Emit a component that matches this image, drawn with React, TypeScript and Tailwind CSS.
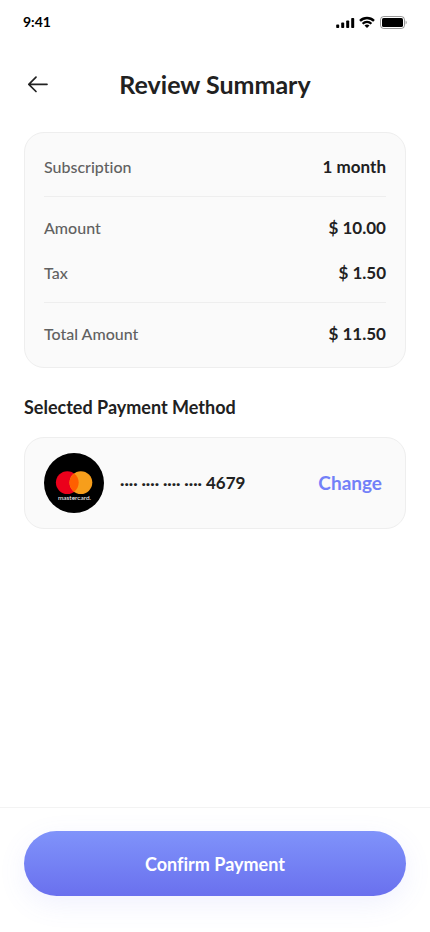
import React from "react";

const charges = [
  { label: "Amount", value: "$ 10.00" },
  { label: "Tax", value: "$ 1.50" },
];

function StatusBar() {
  return (
    <div className="flex h-11 items-center justify-between px-[23px] text-black">
      <span className="text-sm font-bold">9:41</span>
      <div className="flex items-center gap-1">
        <svg width="19" height="12" viewBox="0 0 19 12" fill="currentColor" aria-hidden="true">
          <rect x="0.2" y="8.6" width="3" height="3.4" rx="0.8" />
          <rect x="5.2" y="6.6" width="3" height="5.4" rx="0.8" />
          <rect x="10.2" y="4.4" width="3" height="7.6" rx="0.8" />
          <rect x="15.2" y="2" width="3" height="10" rx="0.8" />
        </svg>
        <svg width="16" height="12" viewBox="0 0 16 12" fill="none" stroke="currentColor" aria-hidden="true">
          <path d="M1 4.800a10 10 0 0 1 14 0" strokeWidth="2.400" />
          <path d="M3.600 7.700a6.200 6.200 0 0 1 8.800 0" strokeWidth="2.200" />
          <path d="M8 12 5.500 9.600a3.600 3.600 0 0 1 5 0z" fill="currentColor" stroke="none" />
        </svg>
        <svg width="28" height="14" viewBox="0 0 28 14" fill="none" aria-hidden="true">
          <rect x="1.500" y="1.500" width="24" height="12" rx="3.200" stroke="#000" strokeOpacity="0.4" />
          <rect x="3" y="3" width="21" height="9" rx="1.600" fill="#000" />
          <path d="M26.600 5.500v4c.7-.4 1.100-1.100 1.100-2s-.4-1.600-1.100-2z" fill="#000" fillOpacity="0.4" />
        </svg>
      </div>
    </div>
  );
}

function Row({ label, value }: { label: string; value: string }) {
  return (
    <div className="flex items-center justify-between">
      <dt className="text-base font-medium text-[#616161]">{label}</dt>
      <dd className="text-[17px] leading-7 font-bold text-[#212121]">{value}</dd>
    </div>
  );
}

function MastercardLogo() {
  return (
    <svg className="shrink-0" width="60" height="60" viewBox="0 0 60 60" role="img" aria-label="Mastercard">
      <circle cx="30" cy="30" r="30" fill="#000" />
      <circle cx="23.300" cy="29.600" r="11.400" fill="#eb001b" />
      <circle cx="36.900" cy="29.600" r="11.400" fill="#f79e1b" />
      <path d="M30.100 20.450a11.400 11.400 0 0 1 0 18.300 11.400 11.400 0 0 1 0-18.300z" fill="#ff5f00" />
      <text x="30.500" y="46.800" textAnchor="middle" fontSize="6.500" fill="#fff" fontFamily="Lato, sans-serif">
        mastercard.
      </text>
    </svg>
  );
}

export default function App() {
  return (
    <div className="flex min-h-screen w-full flex-col bg-white font-['Lato',sans-serif] text-[#212121] [font-variant-ligatures:none]">
      <StatusBar />

      <header className="grid h-20 grid-cols-[28px_1fr_28px] items-center px-6">
        <button type="button" aria-label="Go back" className="flex size-7 items-center justify-center">
          <svg width="28" height="28" viewBox="0 0 28 28" fill="none" stroke="#212121" strokeWidth="1.700" strokeLinecap="round" strokeLinejoin="round">
            <path d="M23 14.300H4.800M12 7.200 4.800 14.300l7.200 7.200" />
          </svg>
        </button>
        <h1 className="text-center text-[25px] leading-8 font-bold">Review Summary</h1>
      </header>

      <main className="flex flex-1 flex-col px-6 pt-2">
        <dl className="rounded-[20px] border border-[#eeeeee] bg-[#fafafa] px-[19px] pt-5 pb-[19px]">
          <Row label="Subscription" value="1 month" />
          <div className="my-[15px] flex flex-col gap-[17px] border-t border-[#eeeeee] pt-[17px]">
            {charges.map((item) => (
              <Row key={item.label} label={item.label} value={item.value} />
            ))}
          </div>
          <div className="border-t border-[#eeeeee] pt-[17px]">
            <Row label="Total Amount" value="$ 11.50" />
          </div>
        </dl>

        <h2 className="mt-[25px] text-lg leading-7 font-bold">Selected Payment Method</h2>

        <section className="mt-4 flex items-center rounded-[20px] border border-[#eeeeee] bg-[#fafafa] py-[15px] pl-[19px] pr-[23px]">
          <MastercardLogo />
          <p className="ml-4 flex flex-1 items-center gap-1 leading-7 font-bold">
            <span className="text-base">···· ···· ···· ····</span>
            <span className="text-[17px]">4679</span>
          </p>
          <button type="button" className="text-[19px] leading-7 font-bold text-[#7280f8]">
            Change
          </button>
        </section>
      </main>

      <footer className="border-t border-[#f3f3f3] px-6 pt-[23px] pb-9">
        <button
          type="button"
          className="h-[65px] w-full rounded-full bg-linear-to-b from-[#8093fa] to-[#6a70ee] text-lg font-bold text-white shadow-[0_8px_28px_rgba(105,115,245,0.1)]"
        >
          Confirm Payment
        </button>
      </footer>
    </div>
  );
}
